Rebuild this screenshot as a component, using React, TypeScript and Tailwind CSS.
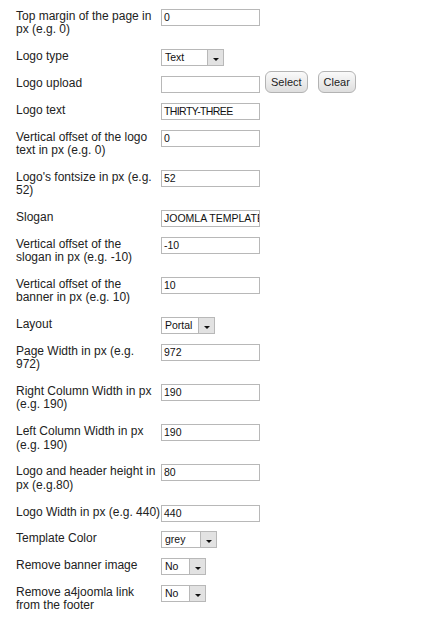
import React from "react";

function TextInput({ value, tight }: { value: string; tight?: boolean }) {
  return (
    <div
      className={
        "w-[99px] h-[17px] border border-[#b8b8b8] bg-white pl-[2px] text-[10.5px] leading-[15px] text-[#111] overflow-hidden whitespace-nowrap" +
        (tight ? " tracking-[-0.6px]" : "")
      }
    >
      {value}
    </div>
  );
}

function SelectBox({ value, width }: { value: string; width: string }) {
  return (
    <div className={`${width} h-[17px] border border-[#b8b8b8] bg-white flex`}>
      <div className="flex-1 pl-[3px] text-[10.5px] leading-[15px] text-[#111] whitespace-nowrap overflow-hidden">
        {value}
      </div>
      <div className="w-[16px] h-full bg-[#e2e2e2] border-l border-[#b8b8b8] flex justify-center pt-[8px]">
        <svg width="6" height="3" viewBox="0 0 6 3">
          <path d="M0 0h6L3 3z" fill="#111" />
        </svg>
      </div>
    </div>
  );
}

function Btn({ children }: { children: React.ReactNode }) {
  return (
    <div className="h-[22px] px-[5px] rounded-[6px] border border-[#b3b3b3] bg-gradient-to-b from-[#fafafa] to-[#dedede] text-[11px] leading-[20px] text-[#222]">
      {children}
    </div>
  );
}

const rows: { label: string[]; control: React.ReactNode; upload?: boolean }[] = [
  { label: ["Top margin of the page in", "px (e.g. 0)"], control: <TextInput value="0" /> },
  { label: ["Logo type"], control: <SelectBox value="Text" width="w-[63px]" /> },
  { label: ["Logo upload"], control: null, upload: true },
  { label: ["Logo text"], control: <TextInput value="THIRTY-THREE" tight /> },
  { label: ["Vertical offset of the logo", "text in px (e.g. 0)"], control: <TextInput value="0" /> },
  { label: ["Logo's fontsize in px (e.g.", "52)"], control: <TextInput value="52" /> },
  { label: ["Slogan"], control: <TextInput value="JOOMLA TEMPLATES" /> },
  { label: ["Vertical offset of the", "slogan in px (e.g. -10)"], control: <TextInput value="-10" /> },
  { label: ["Vertical offset of the", "banner in px (e.g. 10)"], control: <TextInput value="10" /> },
  { label: ["Layout"], control: <SelectBox value="Portal" width="w-[54px]" /> },
  { label: ["Page Width in px (e.g.", "972)"], control: <TextInput value="972" /> },
  { label: ["Right Column Width in px", "(e.g. 190)"], control: <TextInput value="190" /> },
  { label: ["Left Column Width in px", "(e.g. 190)"], control: <TextInput value="190" /> },
  { label: ["Logo and header height in", "px (e.g.80)"], control: <TextInput value="80" /> },
  { label: ["Logo Width in px (e.g. 440)"], control: <TextInput value="440" /> },
  { label: ["Template Color"], control: <SelectBox value="grey" width="w-[56px]" /> },
  { label: ["Remove banner image"], control: <SelectBox value="No" width="w-[45px]" /> },
  { label: ["Remove a4joomla link", "from the footer"], control: <SelectBox value="No" width="w-[45px]" /> },
];

export default function App() {
  return (
    <div
      className="min-h-[624px] bg-white pl-4 pt-[3.3px] text-[12px] text-[#222]"
      style={{ fontFamily: '"Liberation Sans", Arial, sans-serif' }}
    >
      {rows.map((row, i) => (
        <div key={i} className="flex items-start">
          <div className="w-[145px] shrink-0 py-[6.7px] leading-[13.4px] whitespace-nowrap">
            {row.label.map((line, j) => (
              <div key={j}>{line}</div>
            ))}
          </div>
          {row.upload ? (
            <div className="flex items-end pt-[0.7px]">
              <TextInput value="" />
              <div className="ml-[5px]">
                <Btn>Select</Btn>
              </div>
              <div className="ml-[10px]">
                <Btn>Clear</Btn>
              </div>
            </div>
          ) : (
            <div className="pt-[5.7px]">{row.control}</div>
          )}
        </div>
      ))}
    </div>
  );
}
